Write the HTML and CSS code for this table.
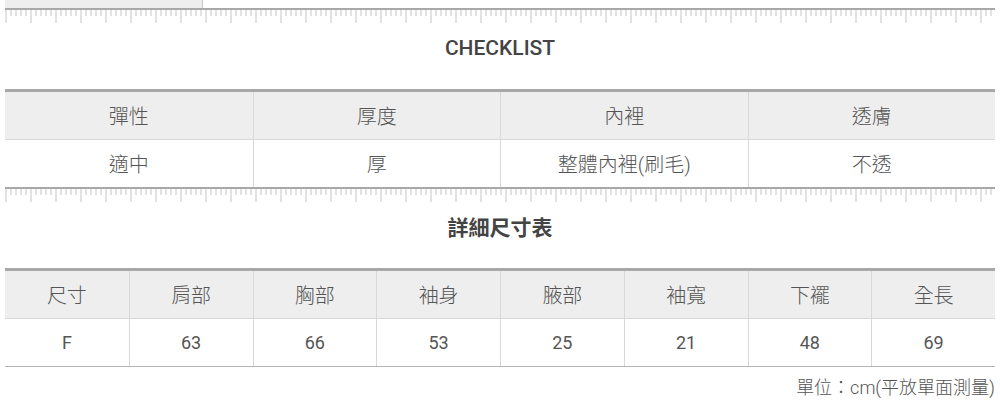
FILE: index.html
```html
<!DOCTYPE html>
<html lang="zh-Hant">
<head>
<meta charset="utf-8">
<title>Checklist</title>
<link rel="stylesheet" href="styles.css">
</head>
<body>
<div class="page">
  <div class="tab-stub"></div>
  <div class="ruler"></div>

  <h2 class="title title-en">CHECKLIST</h2>
  <div class="sheet cols-4">
    <div class="cell head">彈性</div>
    <div class="cell head">厚度</div>
    <div class="cell head">內裡</div>
    <div class="cell head">透膚</div>
    <div class="cell">適中</div>
    <div class="cell">厚</div>
    <div class="cell">整體內裡(刷毛)</div>
    <div class="cell">不透</div>
  </div>
  <div class="ruler"></div>

  <h2 class="title title-zh">詳細尺寸表</h2>
  <div class="sheet cols-8 closed">
    <div class="cell head">尺寸</div>
    <div class="cell head">肩部</div>
    <div class="cell head">胸部</div>
    <div class="cell head">袖身</div>
    <div class="cell head">腋部</div>
    <div class="cell head">袖寬</div>
    <div class="cell head">下襬</div>
    <div class="cell head">全長</div>
    <div class="cell num">F</div>
    <div class="cell num">63</div>
    <div class="cell num">66</div>
    <div class="cell num">53</div>
    <div class="cell num">25</div>
    <div class="cell num">21</div>
    <div class="cell num">48</div>
    <div class="cell num">69</div>
  </div>

  <p class="unit">單位：cm(平放單面測量)</p>
</div>
</body>
</html>
```

FILE: styles.css
```css
* { box-sizing: border-box; }

html, body {
  margin: 0;
  padding: 0;
  background: #fff;
}

body {
  font-family: Roboto, "Noto Sans CJK TC", sans-serif;
  color: #555;
}

.page {
  padding: 0 5px;
  width: 1000px;
}

.tab-stub {
  width: 198px;
  height: 8px;
  background: #eeeeee;
  border-right: 1px solid #c8c8c8;
}

.ruler {
  height: 15px;
  border-top: 2px solid #a8a8a8;
  background-image:
    linear-gradient(to right, #e2e2e2 2px, transparent 2px),
    linear-gradient(to right, #e2e2e2 2px, transparent 2px);
  background-size: 25px 13px, 5px 6px;
  background-repeat: repeat-x, repeat-x;
  background-position: 0 0, 0 0;
}

.title {
  margin: 0;
  text-align: center;
  color: #444;
}

.title-en {
  font-size: 21px;
  font-weight: 500;
  line-height: 24px;
  margin-top: 13px;
  margin-bottom: 29px;
}

.title-zh {
  font-size: 21px;
  font-weight: 700;
  line-height: 28px;
  margin-top: 12px;
  margin-bottom: 26px;
}

.sheet {
  display: grid;
  border-top: 3px solid #a8a8a8;
}

.sheet.cols-4 { grid-template-columns: repeat(4, 1fr); }
.sheet.cols-8 { grid-template-columns: repeat(8, 1fr); }
.sheet.closed { border-bottom: 1px solid #b4b4b4; }

.cell {
  height: 47px;
  display: flex;
  align-items: center;
  justify-content: center;
  font-size: 20px;
  font-weight: 300;
  color: #555;
  border-left: 1px solid #d8d8d8;
}

.cols-4 .cell:nth-child(4n+1),
.cols-8 .cell:nth-child(8n+1) {
  border-left: none;
}

.cell.head {
  height: 48px;
  background: #eeeeee;
  border-bottom: 1px solid #d8d8d8;
}

.cell.num {
  font-size: 18px;
  font-weight: 400;
}

.unit {
  margin: 9px 0 0;
  text-align: right;
  font-size: 18px;
  font-weight: 300;
  line-height: 24px;
  color: #555;
}
```
